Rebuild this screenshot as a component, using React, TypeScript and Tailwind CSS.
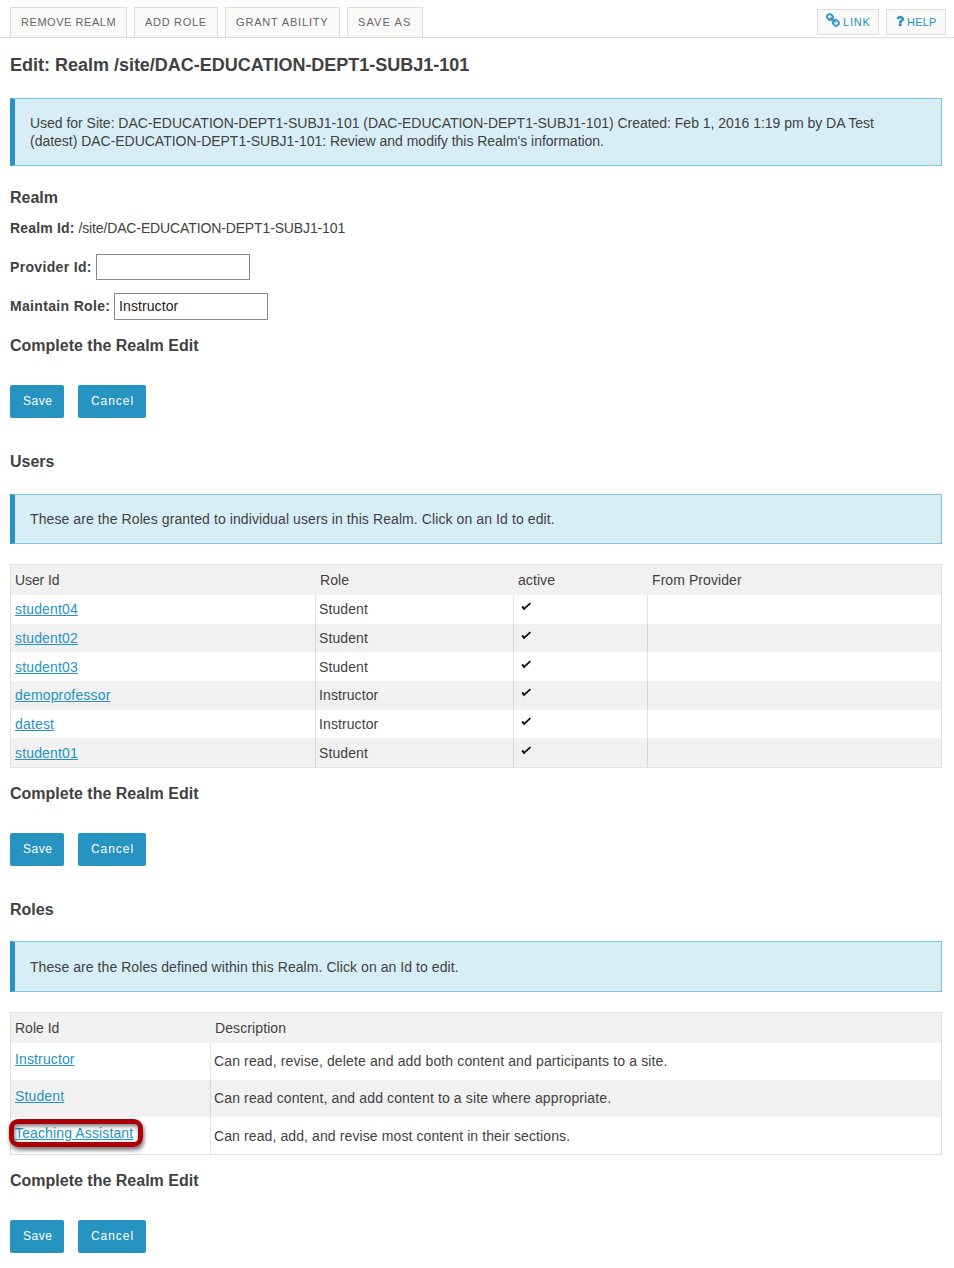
import type { ReactNode } from 'react';

const users = [
  { id: 'student04', role: 'Student' },
  { id: 'student02', role: 'Student' },
  { id: 'student03', role: 'Student' },
  { id: 'demoprofessor', role: 'Instructor' },
  { id: 'datest', role: 'Instructor' },
  { id: 'student01', role: 'Student' },
];

const roles = [
  { id: 'Instructor', description: 'Can read, revise, delete and add both content and participants to a site.', style: 'leading-[37px] tracking-[0.135px]' },
  { id: 'Student', description: 'Can read content, and add content to a site where appropriate.', style: 'leading-[37px] tracking-[0.13px]' },
  { id: 'Teaching Assistant', description: 'Can read, add, and revise most content in their sections.', style: 'leading-[39px] tracking-[0.105px]', marked: true },
];

function Tab({ className, children }: { className: string; children: ReactNode }) {
  return (
    <a className={`h-[30px] shrink-0 border border-b-0 border-[#ddd] bg-[#f9f9f8] pl-[10px] text-[11px] leading-[28px] whitespace-nowrap text-[#666] ${className}`}>
      {children}
    </a>
  );
}

function Heading({ className, children }: { className: string; children: ReactNode }) {
  return <h3 className={`h-5 text-[16px] leading-[22px] font-bold ${className}`}>{children}</h3>;
}

function Info({ className, children }: { className: string; children: ReactNode }) {
  return (
    <div className={`flex items-center border border-l-[5px] border-[#7ec5e0] border-l-[#2693c1] bg-[#d8eef7] pl-[15px] leading-[18px] ${className}`}>
      <p>{children}</p>
    </div>
  );
}

function Buttons() {
  return (
    <div className="mt-[30px] flex h-[33px] gap-[14px] text-[12px] text-white">
      <button className="w-[54px] rounded-[2px] bg-[#2693c1] pb-[2px] pl-[13px] text-left tracking-[0.55px]">Save</button>
      <button className="w-[68px] rounded-[2px] bg-[#2693c1] pb-[2px] pl-[13px] text-left tracking-[0.95px]">Cancel</button>
    </div>
  );
}

function Check() {
  return (
    <svg width="11" height="10" viewBox="0 0 11 10" fill="none">
      <path d="M1.2 4.6L3.1 7L9.4 1.2" stroke="#111" strokeWidth="1.8" />
      <path d="M0.8 4L3 4.8L3.2 8.6Z" fill="#111" />
    </svg>
  );
}

export default function App() {
  return (
    <div className="h-[1268px] w-[954px] bg-white font-['Liberation_Sans',Arial,sans-serif] text-[14px] text-[#414141]">
      <header className="flex h-[38px] justify-between border-b border-[#ddd] pr-2 pl-[10px]">
        <nav className="flex items-end gap-[7px]">
          <Tab className="w-[117px] tracking-[0.55px]">REMOVE REALM</Tab>
          <Tab className="w-[84px] tracking-[0.7px]">ADD ROLE</Tab>
          <Tab className="w-[115px] tracking-[0.83px]">GRANT ABILITY</Tab>
          <Tab className="w-[76px] tracking-[1.1px]">SAVE AS</Tab>
        </nav>
        <div className="flex gap-[7px] pt-[9px] text-[11px] leading-[24px] text-[#2693c1]">
          <a className="flex h-[26px] w-[62px] border border-[#ddd] bg-[#f9f9f8] pl-[8px] tracking-[0.8px]">
            <svg className="mt-[3px] mr-[2px]" width="15" height="15" viewBox="0 0 1792 1792" fill="currentColor" stroke="currentColor" strokeWidth="40">
              <path d="M1456 1216q0-40-28-68l-208-208q-28-28-68-28-42 0-72 32 3 3 19 18.500t21.500 21.500 15 19 13 25.500 3.500 27.500q0 40-28 68t-68 28q-15 0-27.500-3.500t-25.500-13-19-15-21.500-21.500-18.500-19q-33 31-33 73 0 40 28 68l206 207q27 27 68 27 40 0 68-26l147-146q28-28 28-67zm-703-705q0-40-28-68l-206-207q-28-28-68-28-39 0-68 27l-147 146q-28 28-28 67 0 40 28 68l208 208q27 27 68 27 42 0 72-31-3-3-19-18.500t-21.500-21.500-15-19-13-25.500-3.500-27.500q0-40 28-68t68-28q15 0 27.500 3.500t25.500 13 19 15 21.500 21.500 18.500 19q33-31 33-73zm895 705q0 120-85 203l-147 146q-83 83-203 83-121 0-204-85l-206-207q-83-83-83-203 0-123 88-209l-88-88q-86 88-208 88-120 0-204-84l-208-208q-84-84-84-204t85-203l147-146q83-83 203-83 121 0 204 85l206 207q83 83 83 203 0 123-88 209l88 88q86-88 208-88 120 0 204 84l208 208q84 84 84 204z" />
            </svg>
            LINK
          </a>
          <a className="flex h-[26px] w-[60px] border border-[#ddd] bg-[#f9f9f8] pl-[9px] tracking-[0.2px]">
            <svg className="mt-[4px] mr-[3px]" width="8" height="14" viewBox="384 0 1024 1792" fill="currentColor" stroke="currentColor" strokeWidth="40">
              <path d="M1088 1256v240q0 16-12 28t-28 12h-240q-16 0-28-12t-12-28v-240q0-16 12-28t28-12h240q16 0 28 12t12 28zm316-600q0 54-15.500 101t-35 76.500-55 59.500-57.500 43.500-61 35.500q-41 23-68.500 65t-27.500 67q0 17-12 32.500t-28 15.500h-240q-15 0-25.500-18.500t-10.500-37.500v-45q0-83 65-156.500t143-108.500q59-27 84-56t25-76q0-42-46.500-74t-107.500-32q-65 0-108 29-35 25-107 115-13 16-31 16-12 0-25-8l-164-125q-13-10-15.500-25t5.500-28q160-266 464-266 80 0 161 31t146 83 106 127.500 41 158.500z" />
            </svg>
            HELP
          </a>
        </div>
      </header>

      <main className="pt-4 pr-3 pl-[10px]">
        <h2 className="h-[22px] text-[18px] leading-[22px] font-bold tracking-[-0.01px]">Edit: Realm /site/DAC-EDUCATION-DEPT1-SUBJ1-101</h2>
        <Info className="mt-[22px] h-[68px] tracking-[-0.022px]">
          Used for Site: DAC-EDUCATION-DEPT1-SUBJ1-101 (DAC-EDUCATION-DEPT1-SUBJ1-101) Created: Feb 1, 2016 1:19 pm by DA Test
          <br />
          (datest) DAC-EDUCATION-DEPT1-SUBJ1-101: Review and modify this Realm's information.
        </Info>

        <Heading className="mt-[21px]">Realm</Heading>
        <p className="mt-[11px] h-5 leading-5 tracking-[-0.13px]"><b className="tracking-[0.18px]">Realm Id:</b> /site/DAC-EDUCATION-DEPT1-SUBJ1-101</p>
        <div className="mt-4 flex h-[26px] items-center">
          <label className="w-[86px] font-bold tracking-[0.33px]">Provider Id:</label>
          <input className="h-full w-[154px] border border-[#888] px-[4px]" />
        </div>
        <div className="mt-[13px] flex h-[27px] items-center">
          <label className="w-[104px] font-bold tracking-[0.33px]">Maintain Role:</label>
          <input className="h-full w-[154px] border border-[#888] px-[4px] pb-[2px] tracking-[0.1px] text-[#222]" defaultValue="Instructor" />
        </div>
        <Heading className="mt-[15px]">Complete the Realm Edit</Heading>
        <Buttons />

        <Heading className="mt-[33px]">Users</Heading>
        <Info className="mt-[23px] h-[50px] tracking-[0.093px]">These are the Roles granted to individual users in this Realm. Click on an Id to edit.</Info>
        <div className="mt-5 h-[204px] border border-[#e0e0e0]">
          <div className="grid h-[30px] grid-cols-[305px_198px_134px_1fr] bg-[#f1f1f1] pl-[4px] leading-[30px] tracking-[0.08px]">
            <span className="tracking-[-0.1px]">User Id</span>
            <span>Role</span>
            <span>active</span>
            <span>From Provider</span>
          </div>
          {users.map((user) => (
            <div key={user.id} className="grid h-[28.667px] grid-cols-[304px_198px_134px_1fr] leading-[28px] tracking-[0.1px] odd:bg-[#f1f1f1] even:bg-white">
              <span className="pt-[0.25px] pl-[4px] tracking-[0.16px]"><a className="text-[#2693c1] underline">{user.id}</a></span>
              <span className="border-l border-black/10 pt-[0.25px] pl-[3px]">{user.role}</span>
              <span className="border-l border-black/10 pt-[7.25px] pl-[7px]"><Check /></span>
              <span className="border-l border-black/10" />
            </div>
          ))}
        </div>
        <Heading className="mt-[15px]">Complete the Realm Edit</Heading>
        <Buttons />

        <Heading className="mt-[33px]">Roles</Heading>
        <Info className="mt-[22px] h-[51px] tracking-[0.065px]">These are the Roles defined within this Realm. Click on an Id to edit.</Info>
        <div className="mt-5 h-[143px] border border-[#e0e0e0]">
          <div className="grid h-[30px] grid-cols-[200px_1fr] bg-[#f1f1f1] pl-[4px] leading-[30px]">
            <span>Role Id</span>
            <span className="tracking-[0.1px]">Description</span>
          </div>
          {roles.map((role) => (
            <div key={role.id} className="grid h-[37px] grid-cols-[199px_1fr] odd:bg-[#f1f1f1] even:bg-white">
              <span className="relative pl-[4px] leading-[32px] tracking-[0.13px]">
                <a className="text-[#2693c1] underline">{role.id}</a>
                {role.marked && (
                  <span className="absolute top-[2px] left-[-2px] h-[28px] w-[134px] rounded-[9px] border-[5px] border-[#ab0007] shadow-[1px_3px_4px_rgba(0,0,0,0.55),inset_1px_2px_4px_rgba(0,0,0,0.55)]" />
                )}
              </span>
              <span className={`h-[37px] border-l border-black/10 pl-[3px] ${role.style}`}>{role.description}</span>
            </div>
          ))}
        </div>
        <Heading className="mt-[15px]">Complete the Realm Edit</Heading>
        <Buttons />
      </main>
    </div>
  );
}
